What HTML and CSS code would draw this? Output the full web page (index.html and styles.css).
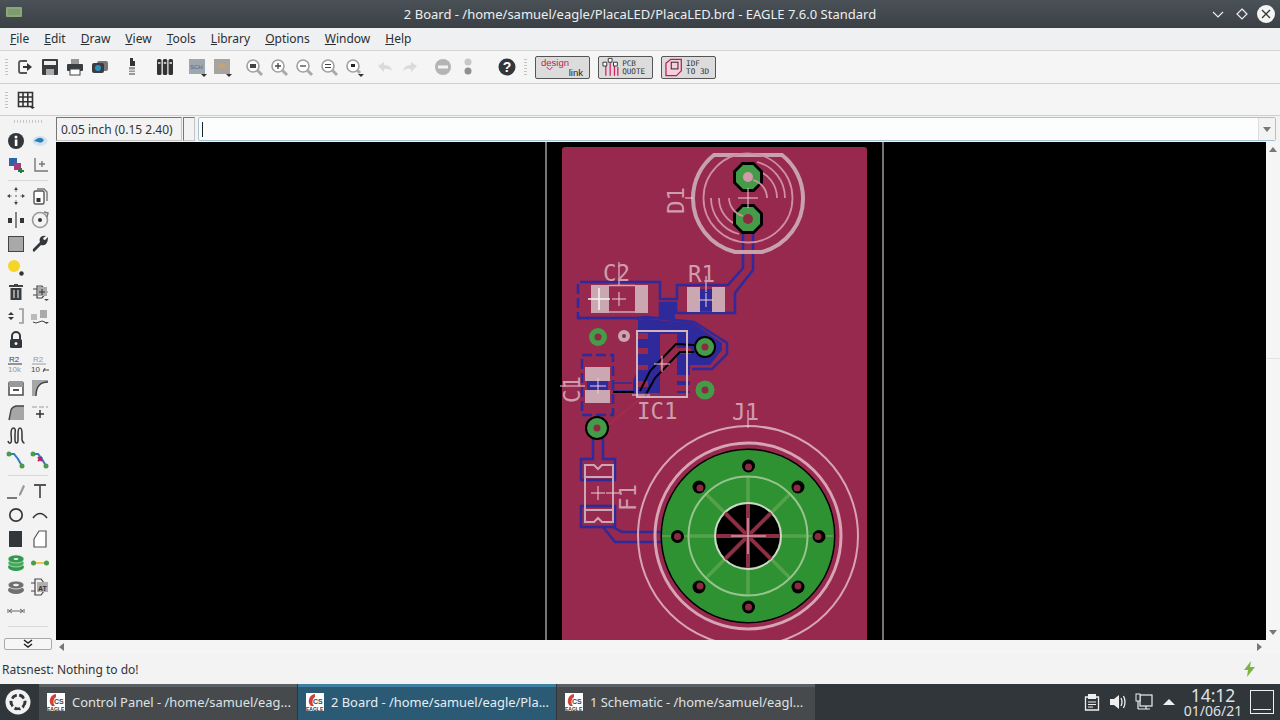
FILE: index.html
```html
<!DOCTYPE html>
<html lang="en">
<head>
<meta charset="utf-8">
<title>2 Board - EAGLE</title>
<link rel="stylesheet" href="styles.css">
</head>
<body>
<div class="window">
  <header class="titlebar">
    <svg class="win-icon" width="16" height="10" viewBox="0 0 16 10"><rect width="16" height="10" rx="1" fill="#8aa878"/><rect x="2" y="2" width="12" height="6" fill="#7f9c70"/></svg>
    <span class="title">2 Board - /home/samuel/eagle/PlacaLED/PlacaLED.brd - EAGLE 7.6.0 Standard</span>
    <div class="win-buttons">
      <svg width="72" height="24" viewBox="0 0 72 24"><path d="M8 10l5 5 5-5" fill="none" stroke="#eee" stroke-width="1.2"/><path d="M37 7l5 5-5 5-5-5z" fill="none" stroke="#eee" stroke-width="1.2"/><circle cx="61" cy="12" r="9" fill="#f4f4f4"/><path d="M57 8l8 8M65 8l-8 8" stroke="#333" stroke-width="1.3"/></svg>
    </div>
  </header>

  <nav class="menubar">
    <span class="menu"><u>F</u>ile</span><span class="menu"><u>E</u>dit</span><span class="menu"><u>D</u>raw</span><span class="menu"><u>V</u>iew</span><span class="menu"><u>T</u>ools</span><span class="menu"><u>L</u>ibrary</span><span class="menu"><u>O</u>ptions</span><span class="menu"><u>W</u>indow</span><span class="menu"><u>H</u>elp</span>
  </nav>

  <div class="toolbar">
    <span class="grip"></span>
    <span class="tb tb-first"><svg viewBox="0 0 20 20"><path d="M11 4H5Q3 4 3 6v8q0 2 2 2h6" fill="none" stroke="#555" stroke-width="1.800"/><path d="M7 10h6" stroke="#333" stroke-width="2"/><path d="M11 6l5 4-5 4z" fill="#333"/></svg></span>
    <span class="tb"><svg viewBox="0 0 20 20"><path d="M3 2h14q1 0 1 1v14q0 1-1 1H3q-1 0-1-1V3q0-1 1-1z" fill="#3a3d40"/><rect x="4" y="4" width="12" height="4" fill="#eee"/><rect x="6" y="12" width="8" height="6" fill="#aaa"/></svg></span>
    <span class="tb"><svg viewBox="0 0 20 20"><rect x="6" y="2" width="8" height="5" fill="#999"/><rect x="2" y="7" width="16" height="7" rx="1" fill="#3a3d40"/><rect x="5" y="12" width="10" height="6" fill="#fff" stroke="#444"/></svg></span>
    <span class="tb"><svg viewBox="0 0 20 20"><rect x="7" y="4" width="11" height="10" rx="2" fill="#777"/><rect x="2" y="6" width="12" height="10" rx="2" fill="#3a3d40"/><circle cx="8" cy="11" r="3" fill="#2f8fc0"/></svg></span>
    <span class="tb tb-gap7"><svg viewBox="0 0 20 20"><path d="M8 1h3v3h2v5H8z" fill="#333"/><rect x="7" y="10" width="6" height="8" fill="#999"/><path d="M7 13h6M7 15.500h6" stroke="#eee"/></svg></span>
    <span class="tb tb-gap8"><svg viewBox="0 0 20 20"><rect x="2" y="2" width="4.500" height="16" rx="1.500" fill="#333"/><rect x="7.800" y="2" width="4.500" height="16" rx="1.500" fill="#333"/><rect x="13.500" y="2" width="4.500" height="16" rx="1.500" fill="#333"/><path d="M3 6h2.500M8.800 6h2.500M14.500 6h2.500" stroke="#eee" stroke-width="1.500"/></svg></span>
    <span class="tb tb-gap7"><svg viewBox="0 0 20 20"><rect x="2" y="2" width="16" height="15" fill="#9fa6ad"/><text x="3" y="12" class="sck">SCH</text><path d="M14 17h6l-3 3z" fill="#333"/></svg></span>
    <span class="tb"><svg viewBox="0 0 20 20"><rect x="2" y="2" width="16" height="15" fill="#a9a39d"/><rect x="7" y="7" width="6" height="4" fill="#c9a36d"/><path d="M14 17h6l-3 3z" fill="#333"/></svg></span>
    <span class="tb tb-gap7"><svg viewBox="0 0 20 20"><circle cx="9" cy="9" r="6" fill="#fff" stroke="#a0a0a0" stroke-width="1.600"/><rect x="6" y="7" width="6" height="4" fill="#444"/><path d="M13 13l5 5" stroke="#aaa" stroke-width="3"/></svg></span>
    <span class="tb"><svg viewBox="0 0 20 20"><circle cx="9" cy="9" r="6" fill="#fff" stroke="#a0a0a0" stroke-width="1.600"/><path d="M6 9h6M9 6v6" stroke="#444" stroke-width="1.300"/><path d="M13 13l5 5" stroke="#aaa" stroke-width="3"/></svg></span>
    <span class="tb"><svg viewBox="0 0 20 20"><circle cx="9" cy="9" r="6" fill="#fff" stroke="#a0a0a0" stroke-width="1.600"/><path d="M6 9h6" stroke="#444" stroke-width="1.300"/><path d="M13 13l5 5" stroke="#aaa" stroke-width="3"/></svg></span>
    <span class="tb"><svg viewBox="0 0 20 20"><circle cx="9" cy="9" r="6" fill="#fff" stroke="#a0a0a0" stroke-width="1.600"/><path d="M6 7.500h6M6 10.500h6" stroke="#444" stroke-width="1.100"/><path d="M13 13l5 5" stroke="#aaa" stroke-width="3"/></svg></span>
    <span class="tb"><svg viewBox="0 0 20 20"><circle cx="9" cy="9" r="6" fill="#fff" stroke="#a0a0a0" stroke-width="1.600"/><rect x="7" y="7" width="4" height="3" fill="#222"/><path d="M13 13l3 3" stroke="#aaa" stroke-width="3"/><path d="M14 17h6l-3 3z" fill="#333"/></svg></span>
    <span class="tb tb-gap6"><svg viewBox="0 0 20 20"><path d="M3 9l6-4v3q7 0 8 6-3-3-8-2v3z" fill="#dadada"/></svg></span>
    <span class="tb"><svg viewBox="0 0 20 20"><path d="M17 9l-6-4v3q-7 0-8 6 3-3 8-2v3z" fill="#dadada"/></svg></span>
    <span class="tb tb-gap8"><svg viewBox="0 0 20 20"><circle cx="10" cy="10" r="8" fill="#b4b4b4"/><rect x="5" y="8.500" width="10" height="3" fill="#f3f3f3"/></svg></span>
    <span class="tb"><svg viewBox="0 0 20 20"><circle cx="10" cy="5" r="3.500" fill="#c8c8c8"/><circle cx="10" cy="14" r="3.500" fill="#8f8f8f"/></svg></span>
    <span class="tb tb-gap14"><svg viewBox="0 0 20 20"><circle cx="10" cy="10" r="8.500" fill="#33373b"/><text x="10" y="15" class="help">?</text></svg></span>
    <span class="grip grip-right"></span>
    <button class="ext ext-first" type="button"><svg width="49" height="20" viewBox="0 0 49 20"><text x="2" y="9" class="ext-pink">design</text><text x="31" y="19" class="ext-black">link</text><path d="M8 10l3 3 3-3" fill="none" stroke="#c2185b"/></svg></button>
    <button class="ext" type="button"><svg width="49" height="20" viewBox="0 0 49 20"><path d="M4 8v11M8.500 5v14M13 8v11M16.500 10v9" stroke="#d81b60" stroke-width="1.300" fill="none"/><path d="M1 5h4v4H1zM6.500 1h4v4h-4zM12 5h4v4h-4z" fill="#fff" stroke="#333"/><text x="21" y="9" class="ext-mono">PCB</text><text x="21" y="17" class="ext-mono">QUOTE</text></svg></button>
    <button class="ext" type="button"><svg width="49" height="20" viewBox="0 0 49 20"><path d="M1 6l5-4h11v12l-5 5H1z" fill="#f8d0dd" stroke="#c2185b" stroke-width="1.300"/><rect x="6.500" y="5" width="7" height="7" fill="none" stroke="#222"/><text x="22" y="9" class="ext-mono">IDF</text><text x="22" y="17" class="ext-mono">TO 3D</text></svg></button>
  </div>

  <div class="toolbar2">
    <span class="grip"></span>
    <svg class="grid-icon" width="18" height="18" viewBox="0 0 18 18"><path d="M1.500 1.500h14v14h-14zM1.500 6h14M1.500 10.700h14M6 1.500v14M10.800 1.500v14" fill="none" stroke="#333" stroke-width="1.600"/><path d="M13 16h5l-2.500 2z" fill="#333"/></svg>
  </div>

  <div class="workspace">
    <aside class="sidebar">
      <div class="side-grip"></div>
      <div class="tools">
        <span><svg viewBox="0 0 20 20"><circle cx="10" cy="10" r="8" fill="#33373b"/><rect x="8.800" y="8.500" width="2.600" height="6.500" fill="#fff"/><circle cx="10" cy="6" r="1.500" fill="#fff"/></svg></span>
        <span><svg viewBox="0 0 20 20"><ellipse cx="10" cy="10" rx="7.500" ry="5" fill="#d4e4ee"/><path d="M4 10q6-6 10-1-2 4-6 2z" fill="#2a7fb8"/></svg></span>
        <span><svg viewBox="0 0 20 20"><rect x="3" y="3" width="8" height="8" fill="#2f62a8"/><rect x="8" y="8" width="7" height="7" fill="#a83a78"/><path d="M12 16h6" stroke="#2b7a3d" stroke-width="2"/><path d="M15 13v5" stroke="#2b7a3d" stroke-width="2"/></svg></span>
        <span><svg viewBox="0 0 20 20"><path d="M5 3v13h13M9 9h6M12 6v6" fill="none" stroke="#777" stroke-width="1.400"/></svg></span>
      </div>
      <div class="side-sep"></div>
      <div class="tools">
        <span><svg viewBox="0 0 20 20"><path d="M10 4v12M4 10h12" stroke="#888" stroke-dasharray="2 3"/><path d="M10 1l2 3H8zM10 19l-2-3h4zM1 10l3-2v4zM19 10l-3 2V8z" fill="#444"/></svg></span>
        <span><svg viewBox="0 0 20 20"><rect x="4" y="5" width="10" height="13" rx="1.500" fill="#fff" stroke="#555" stroke-width="1.400"/><path d="M7 3h7l3 3v9" fill="none" stroke="#777" stroke-width="1.400"/><rect x="6.500" y="12" width="4" height="4" fill="#333"/></svg></span>
        <span><svg viewBox="0 0 20 20"><path d="M10 2v16" stroke="#555" stroke-width="1.400"/><rect x="2" y="8" width="4" height="5" fill="#33373b"/><rect x="14" y="8" width="4" height="5" fill="#33373b"/></svg></span>
        <span><svg viewBox="0 0 20 20"><circle cx="10" cy="10" r="7.500" fill="none" stroke="#999" stroke-width="1.600"/><circle cx="10" cy="10" r="2" fill="#333"/><path d="M14 2l4 1-1 4" fill="none" stroke="#777" stroke-width="1.400"/></svg></span>
        <span><svg viewBox="0 0 20 20"><rect x="2.500" y="2.500" width="15" height="15" fill="#a7a9ab" stroke="#444"/></svg></span>
        <span><svg viewBox="0 0 20 20"><path d="M18 3l-3 3-1.500-.500L13 4l3-2q-4-1-6 2-1 2 0 4l-7 7q-1 2 1 3l7-7q3 1 5-1 2-2 2-7z" fill="#33373b"/></svg></span>
        <span><svg viewBox="0 0 20 20"><circle cx="8" cy="8" r="6" fill="#f4d528"/><circle cx="15.500" cy="15.500" r="2.200" fill="#333"/></svg></span>
        <span></span>
        <span><svg viewBox="0 0 20 20"><path d="M3 4h14" stroke="#444" stroke-width="2"/><rect x="8" y="2" width="4" height="2" fill="#444"/><path d="M4.500 6h11v12h-11z" fill="#3a3d40"/><path d="M8 8v8M12 8v8" stroke="#ddd" stroke-width="1.200"/></svg></span>
        <span><svg viewBox="0 0 20 20"><path d="M3 7h4M3 13h4M7 4h5l5 6-5 6H7z" fill="none" stroke="#444" stroke-width="1.200"/><rect x="8" y="5" width="9" height="9" fill="#aaa"/><path d="M9 10h6M12 7v6" stroke="#333"/><path d="M14 17h5l-2.500 2z" fill="#444"/></svg></span>
        <span><svg viewBox="0 0 20 20"><path d="M13 3h4v14h-4" fill="none" stroke="#999" stroke-width="1.600"/><path d="M5 6l3 3H2zM5 14l3-3H2z" fill="#33373b"/></svg></span>
        <span><svg viewBox="0 0 20 20"><rect x="1" y="8" width="6" height="6" fill="#bbb"/><rect x="10" y="4" width="7" height="8" fill="#aaa"/><path d="M3 16q3 2 6 0t6 0" fill="none" stroke="#444"/><path d="M14 16h5l-2.500 2z" fill="#444"/></svg></span>
        <span><svg viewBox="0 0 20 20"><path d="M6 9V6a4 4 0 0 1 8 0v3" fill="none" stroke="#33373b" stroke-width="2"/><rect x="4" y="9" width="12" height="9" rx="1.500" fill="#33373b"/><circle cx="10" cy="13.500" r="1.500" fill="#eee"/></svg></span>
        <span></span>
        <span><svg viewBox="0 0 20 20"><text x="3" y="8" class="ic-lbl">R2</text><path d="M2 10h14" stroke="#555" stroke-width="1.200"/><text x="2" y="18" class="ic-lbl-g">10k</text></svg></span>
        <span><svg viewBox="0 0 20 20"><text x="3" y="8" class="ic-lbl-g">R2</text><path d="M2 10h14" stroke="#aaa" stroke-width="1.200"/><text x="1" y="18" class="ic-lbl">10</text><path d="M13 16h6M15 14l-2 4" stroke="#444"/></svg></span>
        <span><svg viewBox="0 0 20 20"><rect x="3" y="5" width="14" height="12" fill="#fff" stroke="#555" stroke-width="1.600"/><rect x="3" y="3" width="14" height="6" fill="#999"/><rect x="7" y="11" width="6" height="2" fill="#555"/></svg></span>
        <span><svg viewBox="0 0 20 20"><path d="M2 18V2h16v2Q6 4 6 18z" fill="#a4a6a8"/><path d="M6 18Q6 4 18 4" fill="none" stroke="#444" stroke-width="1.400"/></svg></span>
        <span><svg viewBox="0 0 20 20"><path d="M3 18L5 8q1-3 5-4h8v14z" fill="#a4a6a8"/><path d="M3 18L5 8q1-3 5-4h8" fill="none" stroke="#444" stroke-width="1.400"/></svg></span>
        <span><svg viewBox="0 0 20 20"><path d="M2 5h16" stroke="#999" stroke-dasharray="5 2"/><path d="M6 12h8M10 8v8" stroke="#333" stroke-width="1.500"/></svg></span>
        <span><svg viewBox="0 0 20 20"><path d="M2 15q1 3 2.500 2T5 8q0-6 2.500-6T9 8v6q0 3 1.500 3T12 14V8q0-6 2-6t2 6v6q1 3 2.500 3" fill="none" stroke="#33373b" stroke-width="1.500"/></svg></span>
        <span></span>
        <span><svg viewBox="0 0 20 20"><path d="M4 4h4l4 5 4 7" fill="none" stroke="#2d7cc0" stroke-width="2"/><circle cx="3" cy="4" r="2.500" fill="#4a9b4c"/><circle cx="16" cy="16" r="2.500" fill="#4a9b4c"/></svg></span>
        <span><svg viewBox="0 0 20 20"><path d="M4 4h4l4 5 4 7" fill="none" stroke="#2d7cc0" stroke-width="2"/><circle cx="3" cy="4" r="2.500" fill="#4a9b4c"/><circle cx="16" cy="16" r="2.500" fill="#4a9b4c"/><path d="M8 7l4 4M12 7l-4 4" stroke="#c2185b" stroke-width="2"/></svg></span>
      </div>
      <div class="side-sep"></div>
      <div class="tools">
        <span><svg viewBox="0 0 20 20"><path d="M1 17h10" stroke="#444" stroke-width="1.400"/><path d="M13 13l4-9 2 1-4 9-2 1z" fill="#999"/></svg></span>
        <span><svg viewBox="0 0 20 20"><path d="M4 4h12M10 4v13" stroke="#555" stroke-width="1.800"/></svg></span>
        <span><svg viewBox="0 0 20 20"><circle cx="10" cy="10" r="6.200" fill="none" stroke="#33373b" stroke-width="1.700"/></svg></span>
        <span><svg viewBox="0 0 20 20"><path d="M3 13Q10 4 17 13" fill="none" stroke="#33373b" stroke-width="1.700"/></svg></span>
        <span><svg viewBox="0 0 20 20"><rect x="3" y="2" width="13" height="16" fill="#33373b"/></svg></span>
        <span><svg viewBox="0 0 20 20"><path d="M4 10l5-8h7v16H4z" fill="#fff" stroke="#555" stroke-width="1.200"/></svg></span>
        <span><svg viewBox="0 0 20 20"><ellipse cx="10" cy="14" rx="8" ry="4" fill="#2f9a4c"/><ellipse cx="10" cy="10" rx="8" ry="4" fill="#3cac55" stroke="#eee" stroke-width=".6"/><ellipse cx="10" cy="6" rx="8" ry="4" fill="#2f9a4c" stroke="#eee" stroke-width=".6"/><ellipse cx="10" cy="6" rx="2.500" ry="1" fill="#eee"/></svg></span>
        <span><svg viewBox="0 0 20 20"><path d="M3 10h14" stroke="#e8c84a" stroke-width="2"/><circle cx="3.500" cy="10" r="2.500" fill="#4a9b4c"/><circle cx="16.500" cy="10" r="2.500" fill="#4a9b4c"/></svg></span>
        <span><svg viewBox="0 0 20 20"><ellipse cx="10" cy="13" rx="8" ry="4" fill="#6e7072"/><ellipse cx="10" cy="8" rx="8" ry="4" fill="#6e7072" stroke="#eee" stroke-width=".8"/><ellipse cx="10" cy="8" rx="3" ry="1.200" fill="#eee"/></svg></span>
        <span><svg viewBox="0 0 20 20"><path d="M1 6h4M1 14h4M5 2h6l6 8-6 8H5z" fill="none" stroke="#444" stroke-width="1.200"/><rect x="7" y="5" width="11" height="10" fill="#b0b0b0"/><text x="8" y="13.500" class="ic-at">AT</text></svg></span>
        <span><svg viewBox="0 0 20 20"><path d="M3 10h14M6 8l-3 2 3 2M14 8l3 2-3 2M2 8v4M18 8v4" fill="none" stroke="#666" stroke-width="1"/></svg></span>
      </div>
      <div class="side-spacer"></div>
      <div class="side-sep side-sep-low"></div>
      <button class="collapse" type="button"><svg width="10" height="10" viewBox="0 0 10 10"><path d="M1 1l4 3 4-3M1 5l4 3 4-3" fill="none" stroke="#222" stroke-width="1.500"/></svg></button>
    </aside>

    <div class="content">
      <div class="commandrow">
        <div class="coords">0.05 inch (0.15 2.40)</div>
        <div class="coords-small"></div>
        <div class="command"><span class="caret"></span><span class="combo"><i class="arrow-down"></i></span></div>
      </div>
      <div class="viewrow">
        <svg class="pcb" width="1210" height="498" viewBox="56 142 1210 498">
          <rect x="56" y="142" width="1210" height="498" fill="#000"/>
          <path d="M546 640V142M883 640V142" fill="none" stroke="#e8e8e8"/>
          <rect x="562" y="147" width="305" height="500" rx="3" fill="#96294d"/>

          <!-- blue copper fill -->
          <path class="cu-fill" d="M645 319L693 323L722 343V350L710 365H690V393H633V380L638 370V320Z"/>
          <rect class="cu-fill" x="661" y="302" width="14" height="17"/>
          <path class="red" d="M660 334h17v63h-17zM637 333h11v6h-11zM637 348h11v6h-11zM637 365h11v5h-11zM637 381h11v6h-11zM677 348h14v6h-14zM677 375h14v6h-14zM677 385h14v6h-14z"/>
          <path class="cu-line" d="M638 320V318L645 317L694 322L727 343V354L712 369H692"/>

          <!-- tracks -->
          <path class="cu-line" d="M743 232V268L728 285H677V299H660V282H590M578 318H660V303H676V313H735V293L753 270V232"/>
          <path class="cu-dash" d="M590 282H578V318H590"/>
          <path class="cu-dash" d="M582 355H613V415H582Z"/>
          <path class="cu-line2" d="M613 383H632M613 391H640"/>
          <path class="cu-line" d="M593 438V459H581V480H615V459H603V438"/>
          <path class="cu-line" d="M581 506H615V527H581ZM603 527L615 542H662M613 527L622 532H662"/>
          <rect class="cu-fill" x="700" y="289" width="12" height="22"/>

          <!-- smd pads -->
          <path class="pad" d="M591 285h18v28h-18zM635 285h13v28h-13z"/>
          <path class="pkg" d="M609 285.500h26M609 312h26"/>
          <path class="pad" d="M687 287h13v25h-13zM712 287h13v25h-13z"/>
          <path class="pad" d="M585 367h25v14h-25zM585 390h25v13h-25z"/>
          <rect class="cu-fill" x="587" y="381" width="21" height="9"/>
          <path class="pkg2" d="M585 477V465H594L598 469L602 465H613V477M585 510V522H594L598 518L602 522H613V510M585 477H613M585 510H613M585 477V510M613 477V510"/>

          <!-- black wires -->
          <path class="wire" d="M694 345L676 344L650 371L640 391M694 352L680 352L655 378L645 396"/>
          <path class="wire" d="M613 392H634"/>
          <path class="rat" d="M606 427L647 393"/>

          <!-- IC outline -->
          <rect class="pkg-box" x="637" y="331" width="50" height="66"/>

          <!-- D1 -->
          <path class="led-ring" d="M693 198A55 55 0 0 1 714 155H782A55 55 0 0 1 803 198A55 55 0 0 1 762 252H735A55 55 0 0 1 693 198"/>
          <circle class="led-in" cx="748" cy="198" r="44.500"/>
          <path class="led-arc" d="M785 198A37 37 0 0 0 757 162M777 198A29 29 0 0 0 756 170M711 198A37 37 0 0 0 739 234M719 198A29 29 0 0 0 740 226"/>
          <path class="black" d="M742 162h12l9 9v12l-9 9h-12l-9-9v-12zM742 204h12l9 9v12l-9 9h-12l-9-9v-12z"/>
          <path class="green" d="M743 165h10l7 7v10l-7 7h-10l-7-7v-10zM743 207h10l7 7v10l-7 7h-10l-7-7v-10z"/>
          <circle class="hole-pale" cx="748" cy="177" r="5"/>
          <circle class="redd" cx="748" cy="219" r="5"/>
          <path class="led-arc" d="M767 198A19 19 0 0 0 753 180M729 198A19 19 0 0 0 743 216"/>

          <!-- vias -->
          <circle class="green" cx="598" cy="337" r="9"/><circle class="redd" cx="598" cy="337" r="3.500"/>
          <circle class="pale" cx="624" cy="336" r="6"/><circle class="redd" cx="624" cy="336" r="2"/>
          <circle class="black" cx="705" cy="347" r="11"/><circle class="green" cx="705" cy="347" r="9"/><circle class="redd" cx="705" cy="347" r="3.500"/>
          <circle class="green" cx="705" cy="390" r="9.500"/><circle class="redd" cx="705" cy="390" r="3.500"/>
          <circle class="black" cx="597" cy="428" r="12"/><circle class="green" cx="597" cy="428" r="10"/><circle class="redd" cx="597" cy="428" r="3.500"/>

          <!-- J1 -->
          <circle class="j-out" cx="748" cy="536" r="110"/>
          <circle class="j-mid" cx="748" cy="536" r="93"/>
          <circle class="black" cx="748" cy="536" r="87.500"/>
          <circle class="j-green" cx="748" cy="536" r="86"/>
          <path class="j-track" d="M662 536H833" />
          <path class="j-spoke" d="M748 503V476M748 569V596M781 536H808M715 536H688M771 513L790 494M725 513L706 494M771 559L790 578M725 559L706 578"/>
          <circle class="j-in" cx="748" cy="536" r="59.500"/>
          <circle class="black" cx="748" cy="536" r="32"/>
          <circle class="j-hole" cx="748" cy="536" r="33"/>
          <path class="j-red" d="M716 536H780M748 504V568M725 513L771 559M771 513L725 559"/>
          <g class="black"><circle cx="748.500" cy="466" r="6.500"/><circle cx="798" cy="487" r="6.500"/><circle cx="819" cy="536.500" r="6.500"/><circle cx="798" cy="587" r="6.500"/><circle cx="748.500" cy="607" r="6.500"/><circle cx="699" cy="587" r="6.500"/><circle cx="677.500" cy="536.500" r="6.500"/><circle cx="699" cy="487" r="6.500"/></g>
          <g class="redd"><circle cx="748.500" cy="467" r="3.500"/><circle cx="797" cy="488" r="3.500"/><circle cx="818" cy="536.500" r="3.500"/><circle cx="798" cy="586" r="3.500"/><circle cx="748.500" cy="607" r="3.500"/><circle cx="700" cy="586" r="3.500"/><circle cx="677.500" cy="536.500" r="3.500"/><circle cx="700" cy="488" r="3.500"/></g>

          <!-- crosses -->
          <path class="cross" d="M731 536H766M748 518V554M738 198H758M748 188V208M748 410V428M612 299H626M619 292V306M699 300H713M706 293V307M590 386H606M598 378V394M591 493H605M598 486V500M654 364H670M662 356V372M685 198H693M619 262V285M706 276V292M560 386H585M632 395H650M606 493H620"/>
          <path class="cross-w" d="M588 299H610M599 288V310"/>

          <!-- labels -->
          <text class="lbl" x="603" y="281">C2</text>
          <text class="lbl" x="688" y="282">R1</text>
          <text class="lbl" x="637" y="419">IC1</text>
          <text class="lbl" x="732" y="420">J1</text>
          <text class="lbl" transform="translate(684 214) rotate(-90)">D1</text>
          <text class="lbl" transform="translate(580 403) rotate(-90)">C1</text>
          <text class="lbl" transform="translate(636 511) rotate(-90)">F1</text>
        </svg>
        <div class="vscroll"><i class="arrow-up"></i><span class="vmark"></span><i class="arrow-down"></i></div>
      </div>
      <div class="hscroll"><i class="arrow-left"></i><i class="arrow-right"></i></div>
    </div>
  </div>

  <footer class="statusbar">
    <span>Ratsnest: Nothing to do!</span>
    <svg class="bolt" width="14" height="16" viewBox="0 0 14 16"><path d="M9 0L2 9h4l-1 7 8-10H8z" fill="#7cb342"/></svg>
  </footer>

  <div class="taskbar">
    <div class="start"><svg width="30" height="30" viewBox="0 0 30 30"><circle cx="15" cy="15" r="12.500" fill="#f2f2f2"/><circle cx="15" cy="15" r="7" fill="none" stroke="#31363b" stroke-width="3" stroke-dasharray="6 2.500"/><path d="M15 3v4M15 23v4M4.600 9l3.500 2M21.900 19l3.500 2M4.600 21l3.500-2M21.900 11l3.500-2" stroke="#f2f2f2" stroke-width="3"/></svg></div>
    <div class="task"><svg class="eagle" viewBox="0 0 18 18"><rect width="18" height="18" fill="#fff"/><path d="M9 1A7 7 0 0 0 5 13H8A6 6 0 0 1 9 4Z" fill="#d3403a"/><text x="7" y="11" class="eg-cs">CS</text><text x="0" y="17.500" class="eg-name">EAGLE</text></svg><span class="task-text">Control Panel - /home/samuel/eag...</span></div>
    <div class="task task-active"><svg class="eagle" viewBox="0 0 18 18"><rect width="18" height="18" fill="#fff"/><path d="M9 1A7 7 0 0 0 5 13H8A6 6 0 0 1 9 4Z" fill="#d3403a"/><text x="7" y="11" class="eg-cs">CS</text><text x="0" y="17.500" class="eg-name">EAGLE</text></svg><span class="task-text">2 Board - /home/samuel/eagle/Pla...</span></div>
    <div class="task"><svg class="eagle" viewBox="0 0 18 18"><rect width="18" height="18" fill="#fff"/><path d="M9 1A7 7 0 0 0 5 13H8A6 6 0 0 1 9 4Z" fill="#d3403a"/><text x="7" y="11" class="eg-cs">CS</text><text x="0" y="17.500" class="eg-name">EAGLE</text></svg><span class="task-text">1 Schematic - /home/samuel/eagl...</span></div>
    <div class="tray">
      <svg class="tray-icon" viewBox="0 0 16 18"><path d="M1.500 4h13v13h-13z" fill="none" stroke="#eee" stroke-width="1.300"/><rect x="4" y="1" width="8" height="5" fill="#eee"/><path d="M4 9h8M4 11.500h8M4 14h5" stroke="#eee"/></svg>
      <svg class="tray-icon" viewBox="0 0 18 18"><path d="M1 6h4l5-4v14l-5-4H1z" fill="#eee"/><path d="M12 5q2 4 0 8M14.500 3q3 6 0 12" fill="none" stroke="#eee" stroke-width="1.300"/></svg>
      <svg class="tray-icon" viewBox="0 0 18 18"><rect x="5" y="2" width="12" height="11" fill="none" stroke="#eee" stroke-width="1.200"/><rect x="1" y="1" width="4" height="7" fill="#31363b" stroke="#eee"/><path d="M3 8v8M3 16h12M11 13v3" stroke="#eee" stroke-width="1.200"/></svg>
      <svg class="tray-arrow" width="14" height="8" viewBox="0 0 14 8"><path d="M7 1l6 6H1z" fill="#eee"/></svg>
      <div class="clock"><div class="time">14:12</div><div class="date">01/06/21</div></div>
      <div class="showdesk"><span></span></div>
    </div>
  </div>
</div>
</body>
</html>
```
FILE: styles.css
```css
* { box-sizing: border-box; }
html, body { margin: 0; padding: 0; width: 1280px; height: 720px; overflow: hidden; }
body { font-family: "Noto Sans", sans-serif; font-size: 13px; color: #232629; background: #eff0f1; }
.window { width: 1280px; height: 720px; display: flex; flex-direction: column; }

.titlebar { height: 28px; flex: none; display: flex; align-items: center; justify-content: center; position: relative; background: linear-gradient(#4a5257, #3b4045); }
.win-icon { position: absolute; left: 6px; top: 7px; }
.title { color: #eceff0; font-size: 13px; }
.win-buttons { position: absolute; right: 0; top: 2px; height: 24px; width: 72px; margin-right: 3px; }
.win-buttons svg { display: block; }

.menubar { height: 23px; flex: none; display: flex; padding: 0 0 0 2.500px; align-items: center; background: #eff0f1; border-bottom: 1px solid #d4d4d4; font-size: 12px; }
.menu { padding: 0 7.500px; color: #2b2e31; line-height: 20px; }

.toolbar { height: 33px; flex: none; display: flex; align-items: center; padding-left: 14px; background: #f5f5f5; border-bottom: 1px solid #cfcfcf; position: relative; }
.toolbar2 { height: 32px; flex: none; display: flex; align-items: center; background: #f5f5f5; border-bottom: 1px solid #cfcfcf; position: relative; }
.grip { position: absolute; left: 5px; top: 8px; width: 3px; height: 17px; background: repeating-linear-gradient(#c4c4c4 0 1px, transparent 1px 3px); }
.grip-right { left: 524px; }
.grid-icon { margin-left: 17px; }
.tb { width: 25px; height: 24px; flex: none; display: flex; align-items: center; justify-content: center; }
.tb svg { width: 20px; height: 20px; display: block; }
.tb-first { width: 23px; }
.tb-gap6 { margin-left: 6px; }
.tb-gap7 { margin-left: 7px; }
.tb-gap8 { margin-left: 8px; }
.tb-gap14 { margin-left: 14px; }
.ext { width: 55px; height: 23px; margin-left: 8px; padding: 0 3px; display: flex; align-items: center; background: #dcdcdc; border: 1px solid #555; border-radius: 2px; flex: none; }
.ext svg { display: block; }
.ext-first { margin-left: 16px; }
.ext-pink { font: 10px "Liberation Sans", sans-serif; fill: #c2185b; }
.ext-black { font: 10px "Liberation Sans", sans-serif; fill: #222; }
.ext-mono { font: 8px "DejaVu Sans Mono", monospace; fill: #333; }
.sck { font: 6px "Liberation Sans", sans-serif; fill: #3f6a9a; }
.help { font: bold 14px "Liberation Sans", sans-serif; fill: #fff; text-anchor: middle; }

.workspace { flex: 1; min-height: 0; display: flex; }
.sidebar { width: 56px; flex: none; display: flex; flex-direction: column; background: #f3f3f3; position: relative; }
.side-grip { height: 9px; flex: none; margin: 4px 14px 0; background: repeating-linear-gradient(90deg, #c8c8c8 0 1px, transparent 1px 3px) 0 0 / 100% 3px no-repeat; }
.tools { display: grid; grid-template-columns: 24px 24px; grid-auto-rows: 24px; padding-left: 4px; flex: none; }
.tools span { display: flex; align-items: center; justify-content: center; }
.tools svg { width: 20px; height: 20px; display: block; }
.side-sep { height: 1px; margin: 3px 8px; background: #d8d8d8; flex: none; }
.side-spacer { flex: 1; }
.side-sep-low { margin: 0 8px 11px; }
.collapse { width: 48px; height: 12px; margin: 0 0 4px 4px; padding: 0; display: flex; align-items: center; justify-content: center; background: #f6f6f6; border: 1px solid #aaa; border-radius: 2px; flex: none; }
.ic-lbl { font: 8px "Liberation Sans", sans-serif; fill: #444; }
.ic-lbl-g { font: 8px "Liberation Sans", sans-serif; fill: #999; }
.ic-at { font: bold 7px "Liberation Sans", sans-serif; fill: #333; }

.content { flex: 1; min-width: 0; display: flex; flex-direction: column; }
.commandrow { height: 26px; flex: none; display: flex; padding: 1px 4px 1px 0; background: #f3f3f3; }
.coords { width: 126px; border: 1px solid #c4c4c4; border-top-color: #777; border-left-color: #777; padding-left: 4px; font-size: 12px; line-height: 23px; color: #333; }
.coords-small { width: 12px; margin-left: 1px; border: 1px solid #c4c4c4; border-top-color: #777; border-left-color: #777; }
.command { flex: 1; margin-left: 3px; background: #fcfefe; border: 1px solid #a4c5d6; border-radius: 2px; display: flex; align-items: center; padding-left: 3px; justify-content: space-between; }
.caret { width: 1px; height: 15px; background: #222; }
.combo { width: 17px; height: 100%; border-left: 1px solid #ddd; background: #f3f3f3; display: flex; align-items: center; justify-content: center; }
.viewrow { height: 498px; flex: none; display: flex; }
.pcb { display: block; flex: none; }
.vscroll { width: 14px; display: flex; flex-direction: column; align-items: center; justify-content: space-between; padding: 5px 0; background: #f5f5f5; position: relative; }
.vmark { position: absolute; left: 0; top: 216px; width: 14px; height: 1px; background: #e2e2e2; }
.hscroll { height: 14px; flex: none; display: flex; justify-content: space-between; align-items: center; padding: 0 18px 0 3px; background: #f5f5f5; }
.arrow-up, .arrow-down, .arrow-left, .arrow-right { display: block; width: 0; height: 0; border-style: solid; border-color: transparent; }
.arrow-up { border-width: 0 4px 5px; border-bottom-color: #777; }
.arrow-down { border-width: 5px 4px 0; border-top-color: #777; }
.arrow-left { border-width: 4px 5px 4px 0; border-right-color: #777; }
.arrow-right { border-width: 4px 0 4px 5px; border-left-color: #777; }

.cu-fill { fill: #2f2a9c; }
.cu-line { fill: none; stroke: #2f2a9c; stroke-width: 2.500; }
.cu-line2 { fill: none; stroke: #2f2a9c; stroke-width: 1.500; }
.cu-dash { fill: none; stroke: #2f2a9c; stroke-width: 2.500; stroke-dasharray: 10 4; }
.red { fill: #96294d; }
.redd { fill: #8a2b42; }
.black { fill: #000; }
.green { fill: #459c48; }
.pale { fill: #c9a6b0; }
.hole-pale { fill: #d39ba9; }
.pad { fill: #cba8b1; }
.pkg { fill: none; stroke: #cfa7b3; stroke-width: 1.500; }
.pkg2 { fill: none; stroke: #cba8b1; stroke-width: 2; }
.pkg-box { fill: none; stroke: #d2b4bf; stroke-width: 2; }
.wire { fill: none; stroke: #000; stroke-width: 2; }
.rat { fill: none; stroke: #b8303a; stroke-width: 1; }
.led-ring { fill: none; stroke: #c7a2ad; stroke-width: 4; }
.led-in { fill: none; stroke: #cf8ea3; stroke-width: 1.800; }
.led-arc { fill: none; stroke: #cf8ea3; stroke-width: 1.800; }
.j-out { fill: none; stroke: #d8a3b4; stroke-width: 2; }
.j-mid { fill: none; stroke: #d8a3b4; stroke-width: 3; }
.j-green { fill: #2e9132; }
.j-track { fill: none; stroke: #6f9c60; stroke-width: 1.500; }
.j-spoke { fill: none; stroke: #55a24a; stroke-width: 3.500; }
.j-in { fill: none; stroke: #97c48d; stroke-width: 2; }
.j-hole { fill: none; stroke: #cfd6c6; stroke-width: 2; }
.j-red { fill: none; stroke: #8c2f45; stroke-width: 4; }
.cross { fill: none; stroke: #eccfd8; stroke-width: 1; }
.cross-w { fill: none; stroke: #f4f4f4; stroke-width: 1.500; }
.lbl { font: 22.500px "DejaVu Sans Mono", monospace; fill: #cf9cac; }

.statusbar { height: 30px; flex: none; display: flex; align-items: center; justify-content: space-between; padding: 0 24px 0 2px; font-size: 12px; background: #f3f3f3; color: #333; }
.bolt { display: block; }

.taskbar { height: 36px; flex: none; display: flex; background: #31363b; }
.start { width: 36px; flex: none; display: flex; align-items: center; justify-content: center; }
.task { width: 258px; flex: none; margin-left: 1px; display: flex; align-items: center; padding: 0 0 3px 8px; background: #464a4d; border-top: 3px solid #5b6064; color: #dfe2e4; }
.start + .task { margin-left: 3px; }
.task-active { background: #2b5a75; border-top-color: #3f7f9f; color: #e6eef2; }
.eagle { width: 18px; height: 18px; flex: none; display: block; }
.eg-cs { font: bold 7px "Liberation Sans", sans-serif; fill: #444; }
.eg-name { font: bold 5px "Liberation Sans", sans-serif; fill: #333; }
.task-text { margin-left: 7px; white-space: nowrap; font-size: 12.900px; }
.tray { margin-left: auto; display: flex; align-items: center; color: #eceff0; padding-right: 6px; }
.tray-icon { width: 18px; height: 18px; margin-right: 8px; display: block; }
.tray-arrow { display: block; margin: 0 0 0 1px; }
.clock { width: 68px; margin-left: 3px; padding-top: 2px; text-align: center; line-height: 1; }
.time { font-size: 17.500px; line-height: 15px; color: #dfe2e4; }
.date { font-size: 14px; line-height: 15px; color: #dfe2e4; }
.showdesk { width: 24px; height: 24px; margin-left: 3px; border: 1px solid #eee; display: flex; align-items: flex-end; padding: 0 2px 3px; }
.showdesk span { display: block; width: 100%; height: 1px; background: #eee; }
```
